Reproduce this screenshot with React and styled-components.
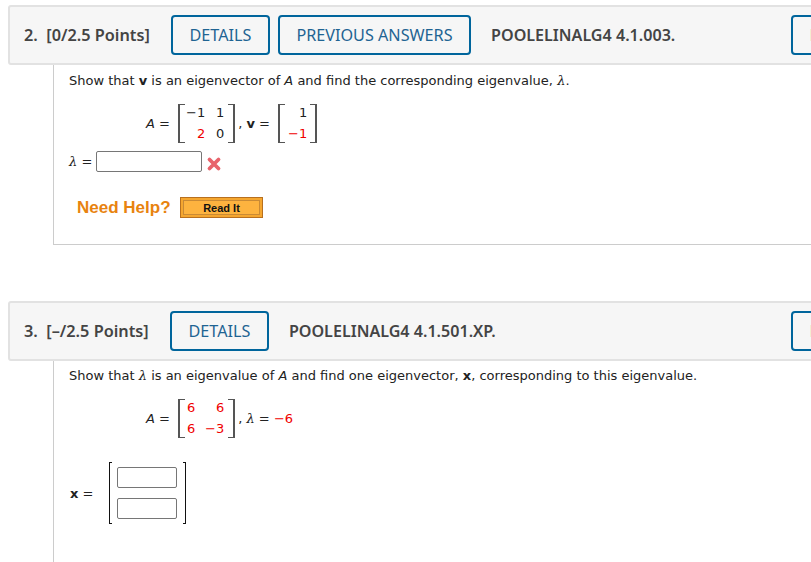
import React from "react";
import styled, { createGlobalStyle } from "styled-components";

const GlobalStyle = createGlobalStyle`
  html, body {
    margin: 0;
    padding: 0;
    background: #fff;
  }
`;

const Page = styled.div`
  width: 811px;
  height: 562px;
  overflow: hidden;
  padding-top: 5px;
  box-sizing: border-box;
  font-family: "DejaVu Sans", Verdana, sans-serif;
  font-size: 13px;
  color: #222;
`;

const Question = styled.section`
  width: 900px;
  margin-left: 8px;
  margin-bottom: ${(p) => p.$gap || 0}px;
`;

const Header = styled.header`
  box-sizing: border-box;
  height: 60px;
  display: flex;
  align-items: center;
  padding: 0 14px;
  background: #f6f6f6;
  border: 2px solid #e2e2e2;
  border-radius: 3px;
  font-family: "Noto Sans", "Open Sans", sans-serif;
  font-size: 16.2px;
`;

const Points = styled.h2`
  margin: 0;
  width: ${(p) => p.$width}px;
  flex-shrink: 0;
  font-size: 16.3px;
  font-weight: 600;
  color: #444;
  white-space: pre;
`;

const HeaderButton = styled.button`
  box-sizing: border-box;
  height: 40px;
  padding: 0 16.5px;
  margin-right: 8px;
  flex-shrink: 0;
  background: transparent;
  border: 2px solid #00659c;
  border-radius: 4px;
  color: #1f6493;
  font-family: inherit;
  font-size: 16.2px;
  white-space: nowrap;
`;

const Code = styled.span`
  margin-left: 12px;
  font-size: 16.1px;
  font-weight: 600;
  color: #444;
  white-space: nowrap;
`;

const PeekButton = styled(HeaderButton)`
  position: absolute;
  left: 791px;
  width: 100px;
  margin: 0;
  color: #e8a080;
`;

const Body = styled.div`
  box-sizing: border-box;
  margin-left: 45px;
  height: ${(p) => p.$height}px;
  padding: ${(p) => p.$top}px 0 0 15px;
  border-left: 1px solid #ccc;
  border-bottom: ${(p) => (p.$closed ? "1px solid #ccc" : "none")};
`;

const Prompt = styled.p`
  margin: 0;
  line-height: 16px;
  white-space: nowrap;
`;

const Equation = styled.div`
  display: flex;
  align-items: center;
  height: 40px;
  margin-top: ${(p) => p.$top}px;
  padding-left: 77px;
  white-space: pre;
`;

const Var = styled.i`
  font-style: italic;
`;

const LambdaGlyph = styled.i`
  font-family: "DejaVu Serif", "DejaVu Sans", serif;
  font-style: italic;
`;

const Bold = styled.b`
  font-weight: 700;
`;

const Matrix = styled.div`
  box-sizing: border-box;
  display: grid;
  grid-template-columns: ${(p) => p.$cols};
  grid-auto-rows: 21px;
  align-content: center;
  align-items: center;
  justify-items: end;
  width: ${(p) => p.$width}px;
  height: 39px;
  margin-right: 3px;
  padding: 0 10px 0 8px;
  position: relative;

  &::before,
  &::after {
    content: "";
    position: absolute;
    top: 0;
    bottom: 0;
    width: 5px;
    border: 1px solid #555;
    border-width: 1px 0;
  }
  &::before {
    left: 0;
    border-left-width: 2px;
  }
  &::after {
    right: 0;
    border-right-width: 2px;
  }
`;

const Cell = styled.span`
  color: ${(p) => (p.$red ? "#f00000" : "#222")};
`;

const Red = styled.span`
  color: #f00000;
`;

const AnswerRow = styled.div`
  display: flex;
  align-items: center;
  height: 22px;
  margin-top: ${(p) => p.$top}px;
  white-space: pre;
`;

const Input = styled.input`
  box-sizing: border-box;
  width: ${(p) => p.$width}px;
  height: 21px;
  margin: 0;
  padding: 0;
  background: #fff;
  border: 1px solid #767676;
  border-radius: 2px;
`;

const WrongIcon = styled.svg`
  width: 16px;
  height: 16px;
  margin: 5px 0 0 4px;
`;

const Help = styled.div`
  display: flex;
  align-items: center;
  margin: 25px 0 0 8px;
  font-family: "Liberation Sans", Arial, sans-serif;
`;

const HelpLabel = styled.span`
  width: 103px;
  font-size: 17px;
  font-weight: 700;
  color: #e8830f;
`;

const ReadIt = styled.button`
  box-sizing: border-box;
  width: 83px;
  height: 21px;
  padding: 0;
  background: #fdb33f;
  border: 1px solid #b8701f;
  box-shadow: inset 0 0 0 2px #f5a62f, inset 0 0 0 3px #c98a35;
  color: #111;
  font-family: inherit;
  font-size: 11px;
  font-weight: 700;
`;

const VectorRow = styled.div`
  display: flex;
  align-items: center;
  margin-top: 24px;
  white-space: pre;
`;

const VectorLabel = styled.span`
  width: 39px;
  padding-left: 1px;
`;

const Vector = styled.div`
  box-sizing: border-box;
  display: flex;
  flex-direction: column;
  gap: 10px;
  width: 77px;
  height: 62px;
  padding: 5px 8px;
  position: relative;

  &::before,
  &::after {
    content: "";
    position: absolute;
    top: 0;
    bottom: 0;
    width: 2px;
    border: 1px solid #111;
    border-width: 1px 0;
  }
  &::before {
    left: 0;
    border-left-width: 1px;
  }
  &::after {
    right: 0;
    border-right-width: 1px;
  }
`;

const Lambda = () => <LambdaGlyph>λ</LambdaGlyph>;

const WrongMark = () => (
  <WrongIcon viewBox="0 0 16 16">
    <path
      d="M3.5 3.5 L12.5 12.5 M12.5 3.5 L3.5 12.5"
      stroke="#e8636b"
      strokeWidth="3.8"
      strokeLinecap="round"
    />
  </WrongIcon>
);

export default function App() {
  return (
    <Page>
      <GlobalStyle />
      <Question $gap={56}>
        <Header>
          <Points $width={147}>{"2.  [0/2.5 Points]"}</Points>
          <HeaderButton>DETAILS</HeaderButton>
          <HeaderButton>PREVIOUS ANSWERS</HeaderButton>
          <Code>POOLELINALG4 4.1.003.</Code>
          <PeekButton>MY NOTES</PeekButton>
        </Header>
        <Body $height={180} $top={8} $closed>
          <Prompt>
            Show that <Bold>v</Bold> is an eigenvector of <Var>A</Var> and find the
            corresponding eigenvalue, <Lambda />.
          </Prompt>
          <Equation $top={14}>
            <Var>A</Var>
            {" =  "}
            <Matrix $cols="19px 19px" $width={57}>
              <Cell>−1</Cell>
              <Cell>1</Cell>
              <Cell $red>2</Cell>
              <Cell>0</Cell>
            </Matrix>
            {", "}
            <Bold>v</Bold>
            {" =  "}
            <Matrix $cols="1fr" $width={39}>
              <Cell>1</Cell>
              <Cell $red>−1</Cell>
            </Matrix>
          </Equation>
          <AnswerRow $top={7}>
            <Lambda />
            {" = "}
            <Input $width={106} readOnly />
            <WrongMark />
          </AnswerRow>
          <Help>
            <HelpLabel>Need Help?</HelpLabel>
            <ReadIt>Read It</ReadIt>
          </Help>
        </Body>
      </Question>
      <Question>
        <Header>
          <Points $width={146}>{"3.  [–/2.5 Points]"}</Points>
          <HeaderButton>DETAILS</HeaderButton>
          <Code>POOLELINALG4 4.1.501.XP.</Code>
          <PeekButton>MY NOTES</PeekButton>
        </Header>
        <Body $height={202} $top={7}>
          <Prompt>
            Show that <Lambda /> is an eigenvalue of <Var>A</Var> and find one
            eigenvector, <Bold>x</Bold>, corresponding to this eigenvalue.
          </Prompt>
          <Equation $top={14}>
            <Var>A</Var>
            {" =  "}
            <Matrix $cols="9px 29px" $width={57}>
              <Cell $red>6</Cell>
              <Cell $red>6</Cell>
              <Cell $red>6</Cell>
              <Cell $red>−3</Cell>
            </Matrix>
            {", "}
            <Lambda />
            {" = "}
            <Red>−6</Red>
          </Equation>
          <VectorRow>
            <VectorLabel>
              <Bold>x</Bold> =
            </VectorLabel>
            <Vector>
              <Input $width={60} readOnly />
              <Input $width={60} readOnly />
            </Vector>
          </VectorRow>
        </Body>
      </Question>
    </Page>
  );
}
